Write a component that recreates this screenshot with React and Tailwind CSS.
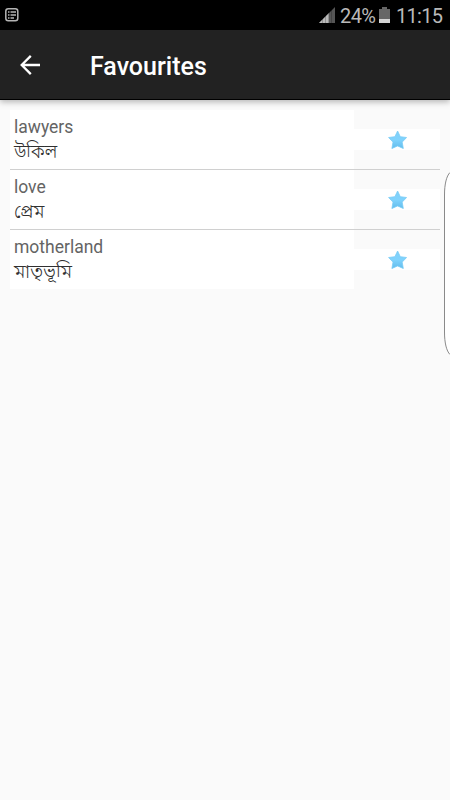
import React from 'react';

const favourites = [
  { id: 1, word: 'lawyers', meaning: 'উকিল', fit: 'scale-x-[0.88]' },
  { id: 2, word: 'love', meaning: 'প্রেম', fit: 'scale-x-[0.91]' },
  { id: 3, word: 'motherland', meaning: 'মাতৃভূমি', fit: 'scale-x-[0.94]' },
];

function StatusBar() {
  return (
    <div className="flex h-[30px] items-center bg-black pl-[5px] pr-[7px] text-[#b9b9b9]">
      <svg width="14" height="14" viewBox="0 0 14 14" fill="none" stroke="#b4b4b4">
        <rect x="0.8" y="0.8" width="12" height="12" rx="2.5" strokeWidth="1.5" />
        <path d="M3 4h1.5M3 7h1.5M3 10h1.5M5.5 4h5.5M5.5 7h5.5M5.5 10h3.5" strokeWidth="1.4" />
      </svg>
      <svg className="ml-auto" width="16" height="16" viewBox="0 0 16 16">
        <path d="M0 16L16 0V16Z" fill="#555" />
        <path d="M0 16L10 6V16Z" fill="#b9b9b9" />
        <path d="M3.5 12v4M6.5 9v7M9.5 6v10M12.5 3v13" stroke="#000" strokeOpacity="0.35" strokeWidth="0.6" />
      </svg>
      <span className="ml-[5px] w-[35px] whitespace-nowrap pt-[2px] text-[20px] leading-[28px] tracking-[-0.6px]">24%</span>
      <svg className="ml-[4px]" width="11" height="16" viewBox="0 0 11 16">
        <path d="M3 0h5v2h3v14H0V2h3Z" fill="#666" />
        <path d="M0 12h11v4H0Z" fill="#d4d4d4" />
      </svg>
      <span className="ml-[6px] w-[47px] whitespace-nowrap pt-[2px] text-[20px] leading-[28px] tracking-[-0.7px]">11:15</span>
    </div>
  );
}

function Toolbar() {
  return (
    <div className="relative flex h-[70px] items-center border-b border-black bg-[#222] pl-5 shadow-[0_2px_6px_rgba(0,0,0,0.28)]">
      <svg width="20" height="20" viewBox="0 0 20 20" fill="none" stroke="#fff" strokeWidth="2.3">
        <path d="M20 10H2M10.8 0.9L1.7 10L10.8 19.1" />
      </svg>
      <h1 className="ml-[50px] mt-[4px] text-[25px] font-medium leading-8 text-white">Favourites</h1>
    </div>
  );
}

function Star() {
  return (
    <svg width="20" height="20" viewBox="0 0 20 20">
      <defs>
        <linearGradient id="star-fill" x1="0" y1="0" x2="0" y2="1">
          <stop offset="0" stopColor="#7fd0f8" />
          <stop offset="0.5" stopColor="#80d3fd" />
          <stop offset="1" stopColor="#63bdec" />
        </linearGradient>
      </defs>
      <path
        d="M10.6 2L13.3 7.7L19.6 8.5L15.2 13.1L16.3 19.5L10.6 16.9L4.9 19.5L6 13.1L1.6 8.5L7.9 7.7Z"
        fill="url(#star-fill)"
        stroke="#78ccf6"
        strokeWidth="0.8"
        strokeLinejoin="round"
      />
    </svg>
  );
}

function FavouriteRow({ word, meaning, fit }) {
  return (
    <li className="flex h-[60px] border-b border-[#d0d0d0] last:h-[59px] last:border-b-0">
      <div className="h-full w-[344px] bg-white pl-1 pt-[5px] text-[#646464]">
        <p className="text-[17.5px] leading-[24px]">{word}</p>
        <p className={`origin-left text-[20px] font-light leading-[25px] text-[#303030] ${fit}`}>{meaning}</p>
      </div>
      <div className="mt-[19px] flex h-[21px] w-[86px] items-start justify-center bg-white">
        <Star />
      </div>
    </li>
  );
}

export default function App() {
  return (
    <div className="relative h-[800px] w-[450px] overflow-hidden bg-[#fafafa] font-[Roboto,'Noto_Sans_Bengali',sans-serif]">
      <StatusBar />
      <Toolbar />
      <ul className="mx-[10px] mt-[10px]">
        {favourites.map((item) => (
          <FavouriteRow key={item.id} word={item.word} meaning={item.meaning} fit={item.fit} />
        ))}
      </ul>
      {/* edge panel handle */}
      <svg className="absolute right-0 top-[171px]" width="7" height="185" viewBox="0 0 7 185" fill="none">
        <path d="M7 1.5C3.5 5 1.5 13 1.5 24V161C1.5 172 3.5 180 7 183.5Z" fill="#fff" />
        <path d="M7 1.5C3.5 5 1.5 13 1.5 24V161C1.5 172 3.5 180 7 183.5" stroke="#8a8a8a" />
      </svg>
    </div>
  );
}
